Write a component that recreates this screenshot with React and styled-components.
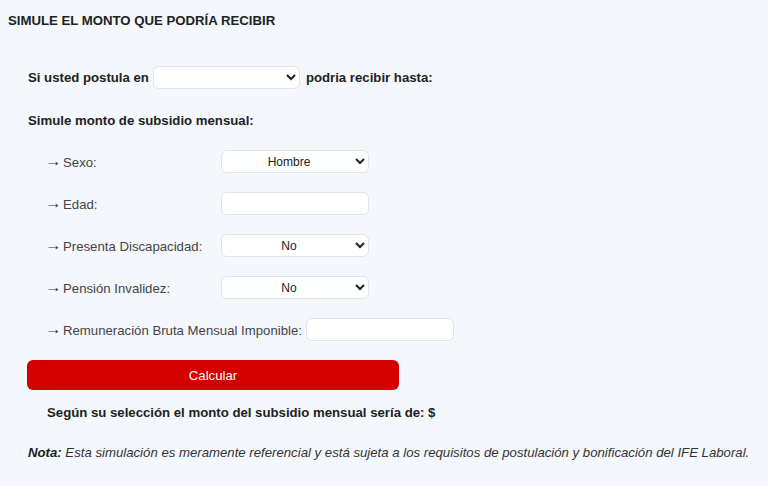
import React from "react";
import styled, { createGlobalStyle } from "styled-components";

const Global = createGlobalStyle`
  html, body { margin: 0; padding: 0; background: #f4f7fc; }
  body { font-family: "Liberation Sans", Arial, sans-serif; color: #222; }
`;

const Page = styled.div`
  padding: 13px 8px 20px 8px;
`;

const Title = styled.h3`
  margin: 0;
  font-size: 13.2px;
  font-weight: bold;
  line-height: 15px;
  color: #222;
`;

const Form = styled.div`
  padding: 37px 0 0 20px;
  display: flex;
  flex-direction: column;
`;

const Line = styled.div`
  display: flex;
  align-items: center;
  gap: 4px;
  font-size: 13.2px;
  font-weight: bold;
  color: #222;
  height: 24px;
`;

const Heading = styled.div`
  font-size: 13.2px;
  font-weight: bold;
  color: #222;
  margin-top: 24px;
  line-height: 15px;
`;

const Fields = styled.div`
  display: flex;
  flex-direction: column;
  gap: 19px;
  padding: 22px 0 0 19px;
`;

const Row = styled.div`
  display: flex;
  align-items: center;
  height: 23px;
`;

const Label = styled.span`
  font-size: 13.2px;
  color: #444;
  width: ${(p) => (p.$w ? `${p.$w}px` : "auto")};
  margin-right: ${(p) => (p.$w ? 0 : 4)}px;
  white-space: nowrap;
`;

const Arrow = styled.span`
  display: inline-block;
  font-size: 15px;
  line-height: 1;
  color: #333;
  margin-left: -2px;
  margin-right: 3px;
  vertical-align: 1px;
  transform: scaleX(1.1);
  transform-origin: left center;
`;

const Select = styled.select`
  width: ${(p) => p.$w || 148}px;
  height: 23px;
  border: 1px solid #dfe3ea;
  border-radius: 6px;
  background: #fff;
  font-family: "Liberation Sans", Arial, sans-serif;
  font-size: 12px;
  color: #222;
  text-align: center;
  text-align-last: center;
  padding: 0 4px;
  box-sizing: border-box;
`;

const Input = styled.input`
  width: 148px;
  height: 23px;
  border: 1px solid #dfe3ea;
  border-radius: 6px;
  background: #fff;
  box-sizing: border-box;
`;

const Button = styled.button`
  margin: 19px 0 0 -1px;
  width: 372px;
  height: 30px;
  border: none;
  border-radius: 6px;
  background: #d50000;
  color: #fff;
  font-family: "Liberation Sans", Arial, sans-serif;
  font-size: 13.2px;
`;

const Result = styled.div`
  margin: 15px 0 0 19px;
  font-size: 13.2px;
  font-weight: bold;
  color: #222;
  line-height: 15px;
`;

const Note = styled.p`
  margin: 25px 0 0 0;
  font-size: 13.2px;
  font-style: italic;
  color: #333;
  line-height: 15px;
  b { font-weight: bold; color: #222; }
`;

const fields = [
  { label: "Sexo", type: "select", value: "Hombre", options: ["Hombre", "Mujer"] },
  { label: "Edad", type: "input" },
  { label: "Presenta Discapacidad", type: "select", value: "No", options: ["No", "Sí"] },
  { label: "Pensión Invalidez", type: "select", value: "No", options: ["No", "Sí"] },
];

export default function App() {
  return (
    <Page>
      <Global />
      <Title>SIMULE EL MONTO QUE PODRÍA RECIBIR</Title>
      <Form>
        <Line>
          <span>Si usted postula en</span>
          <Select $w={147} defaultValue="">
            <option value=""></option>
          </Select>
          <span style={{ marginLeft: 2 }}>podria recibir hasta:</span>
        </Line>
        <Heading>Simule monto de subsidio mensual:</Heading>
        <Fields>
          {fields.map((f) => (
            <Row key={f.label}>
              <Label $w={174}>
                <Arrow>→</Arrow>
                {f.label}:
              </Label>
              {f.type === "select" ? (
                <Select defaultValue={f.value}>
                  {f.options.map((o) => (
                    <option key={o}>{o}</option>
                  ))}
                </Select>
              ) : (
                <Input />
              )}
            </Row>
          ))}
          <Row>
            <Label>
              <Arrow>→</Arrow>
              Remuneración Bruta Mensual Imponible:
            </Label>
            <Input />
          </Row>
        </Fields>
        <Button>Calcular</Button>
        <Result>Según su selección el monto del subsidio mensual sería de: $</Result>
        <Note>
          <b>Nota:</b> Esta simulación es meramente referencial y está sujeta a los requisitos de postulación y bonificación del IFE Laboral.
        </Note>
      </Form>
    </Page>
  );
}
